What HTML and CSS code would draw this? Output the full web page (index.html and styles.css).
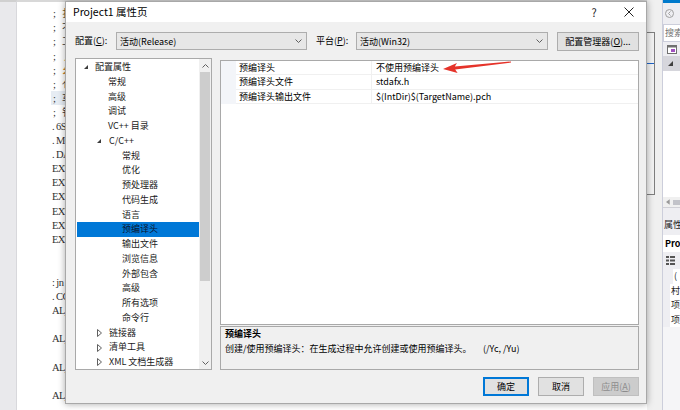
FILE: index.html
```html
<!DOCTYPE html>
<html lang="zh-CN">
<head>
<meta charset="utf-8">
<title>Project1 属性页</title>
<link rel="stylesheet" href="styles.css">
</head>
<body>
<div class="desktop">
  <div class="gutter"></div>
  <div class="editor">
    <div class="code-line"><span class="semi">;</span><span class="cj c-brown">扌</span></div>
    <div class="code-line"><span class="semi">;</span><span class="cj c-dark">不</span></div>
    <div class="code-line"><span class="semi">;</span><span class="cj c-dark">工</span></div>
    <div class="code-line"><span class="semi">;</span><span class="cj c-orange">丿</span></div>
    <div class="code-line"><span class="semi">;</span><span class="cj c-orange">幺</span></div>
    <div class="code-line"><span class="semi">;</span><span class="cj c-dark">亻</span></div>
    <div class="code-line hl"><span class="semi">;</span><span class="cj c-dark">车</span></div>
    <div class="code-line"><span class="semi">;</span><span class="cj c-dark">钅</span></div>
    <div class="code-line">. 6S</div>
    <div class="code-line">. MC</div>
    <div class="code-line">. DA</div>
    <div class="code-line">EXT</div>
    <div class="code-line">EXT</div>
    <div class="code-line">EXT</div>
    <div class="code-line">EXT</div>
    <div class="code-line">EXT</div>
    <div class="code-line">EXT</div>
    <div class="code-line"></div>
    <div class="code-line"></div>
    <div class="code-line">: jn</div>
    <div class="code-line">. CC</div>
    <div class="code-line">AL_</div>
    <div class="code-line"></div>
    <div class="code-line">AL_</div>
    <div class="code-line"></div>
    <div class="code-line">AL_</div>
    <div class="code-line"></div>
    <div class="code-line">AL_</div>
  </div>
  <div class="midstrip">
    <div class="bracket"><div class="blue-line"></div></div>
  </div>
  <div class="solution">
    <div class="sol-top"></div>
    <div class="sol-nav"><svg width="9" height="9" viewBox="0 0 9 9"><circle cx="4.5" cy="4.5" r="4" fill="none" stroke="#a0a0a0"/><path d="M5.5 2.5 L3.5 4.5 L5.5 6.5" fill="none" stroke="#a0a0a0"/></svg></div>
    <div class="sol-search"><span class="clip-text">搜索</span></div>
    <div class="sol-icons"><svg width="10" height="9" viewBox="0 0 10 9"><rect x="0.5" y="0.5" width="9" height="8" fill="#fff" stroke="#707070"/><rect x="0.5" y="0.5" width="9" height="2" fill="#707070"/><rect x="4" y="4" width="4" height="3" fill="#a050c0"/></svg></div>
    <div class="sol-sel"><svg width="5" height="5" viewBox="0 0 5 5"><polygon points="5,0 5,5 0,5" fill="#404040"/></svg></div>
    <div class="sol-tree"></div>
    <div class="sol-hscroll"><svg width="4" height="6" viewBox="0 0 4 6"><polygon points="4,0 4,6 0,3" fill="#999"/></svg><div class="hthumb"></div></div>
    <div class="sol-gap"></div>
    <div class="sol-head"><span class="clip-text">属性</span></div>
    <div class="sol-field">Pro</div>
    <div class="sol-tool"><svg width="9" height="9" viewBox="0 0 9 9"><rect x="0" y="0" width="3" height="2" fill="#555"/><rect x="4" y="0" width="5" height="2" fill="#555"/><rect x="0" y="3.5" width="3" height="2" fill="#555"/><rect x="4" y="3.5" width="5" height="2" fill="#555"/><rect x="0" y="7" width="3" height="2" fill="#555"/><rect x="4" y="7" width="5" height="2" fill="#555"/></svg></div>
    <div class="sol-props">
      <div class="sp-line"><span class="sp-gut"></span><span class="sp-txt">(</span></div>
      <div class="sp-line"><span class="sp-gut"></span><span class="sp-txt">村</span></div>
      <div class="sp-line"><span class="sp-gut"></span><span class="sp-txt">项</span></div>
      <div class="sp-line"><span class="sp-gut"></span><span class="sp-txt">项</span></div>
    </div>
    <div class="sol-rest"></div>
  </div>
</div>

<div class="dialog">
  <div class="titlebar">
    <span class="title">Project1 属性页</span>
    <span class="tb-btn help">?</span>
    <span class="tb-btn close"><svg width="10" height="10" viewBox="0 0 10 10"><path d="M0.5 0.5 L9.5 9.5 M9.5 0.5 L0.5 9.5" stroke="#222" stroke-width="1"/></svg></span>
  </div>
  <div class="dlg-body">
    <div class="config-row">
      <span class="lbl lbl1">配置(<u>C</u>):</span>
      <div class="combo combo1"><span class="combo-text">活动(Release)</span><svg class="chev" width="7" height="4" viewBox="0 0 7 4"><polyline points="0.5,0.5 3.5,3.5 6.5,0.5" fill="none" stroke="#606060"/></svg></div>
      <span class="lbl lbl2">平台(<u>P</u>):</span>
      <div class="combo combo2"><span class="combo-text">活动(Win32)</span><svg class="chev" width="7" height="4" viewBox="0 0 7 4"><polyline points="0.5,0.5 3.5,3.5 6.5,0.5" fill="none" stroke="#606060"/></svg></div>
      <button class="btn mgr">配置管理器(<u>O</u>)...</button>
    </div>

    <div class="main">
      <div class="tree">
        <div class="tree-list">
          <div class="ti l0"><span class="tg"><svg width="4" height="4" viewBox="0 0 4 4"><polygon points="4,0 4,4 0,4" fill="#3c3c3c"/></svg></span>配置属性</div>
          <div class="ti l1">常规</div>
          <div class="ti l1">高级</div>
          <div class="ti l1">调试</div>
          <div class="ti l1">VC++ 目录</div>
          <div class="ti l1t"><span class="tg"><svg width="4" height="4" viewBox="0 0 4 4"><polygon points="4,0 4,4 0,4" fill="#3c3c3c"/></svg></span>C/C++</div>
          <div class="ti l2">常规</div>
          <div class="ti l2">优化</div>
          <div class="ti l2">预处理器</div>
          <div class="ti l2">代码生成</div>
          <div class="ti l2">语言</div>
          <div class="ti l2 sel">预编译头</div>
          <div class="ti l2">输出文件</div>
          <div class="ti l2">浏览信息</div>
          <div class="ti l2">外部包含</div>
          <div class="ti l2">高级</div>
          <div class="ti l2">所有选项</div>
          <div class="ti l2">命令行</div>
          <div class="ti l1t"><span class="tg"><svg width="5" height="8" viewBox="0 0 5 8"><polygon points="0.5,0.5 4.5,4 0.5,7.5" fill="none" stroke="#606060"/></svg></span>链接器</div>
          <div class="ti l1t"><span class="tg"><svg width="5" height="8" viewBox="0 0 5 8"><polygon points="0.5,0.5 4.5,4 0.5,7.5" fill="none" stroke="#606060"/></svg></span>清单工具</div>
          <div class="ti l1t"><span class="tg"><svg width="5" height="8" viewBox="0 0 5 8"><polygon points="0.5,0.5 4.5,4 0.5,7.5" fill="none" stroke="#606060"/></svg></span>XML 文档生成器</div>
        </div>
        <div class="vscroll">
          <div class="sb-arrow"><svg width="7" height="4" viewBox="0 0 7 4"><polyline points="0.5,3.5 3.5,0.5 6.5,3.5" fill="none" stroke="#606060"/></svg></div>
          <div class="sb-track"><div class="sb-thumb"></div></div>
          <div class="sb-arrow"><svg width="7" height="4" viewBox="0 0 7 4"><polyline points="0.5,0.5 3.5,3.5 6.5,0.5" fill="none" stroke="#606060"/></svg></div>
        </div>
      </div>

      <div class="rightcol">
        <div class="grid">
          <div class="row"><div class="gut"></div><div class="name">预编译头</div><div class="val">不使用预编译头</div></div>
          <div class="row"><div class="gut"></div><div class="name">预编译头文件</div><div class="val">stdafx.h</div></div>
          <div class="row"><div class="gut"></div><div class="name">预编译头输出文件</div><div class="val">$(IntDir)$(TargetName).pch</div></div>
        </div>
        <div class="desc">
          <div class="desc-title">预编译头</div>
          <div class="desc-text"><span class="desc-main">创建/使用预编译头：在生成过程中允许创建或使用预编译头。</span><span class="desc-sw">(/Yc, /Yu)</span></div>
        </div>
      </div>
    </div>

    <div class="btn-row">
      <button class="btn ok">确定</button>
      <button class="btn">取消</button>
      <button class="btn disabled">应用(<u>A</u>)</button>
    </div>
  </div>
</div>

<svg class="arrow" width="75" height="20" viewBox="0 0 75 20">
  <polygon points="3,11 17,5 14.8,8.6 71,3.4 71,4.6 15.2,11.4 17.6,15 3,11" fill="#e5332a"/>
</svg>
</body>
</html>
```

FILE: styles.css
```css
* { box-sizing: border-box; margin: 0; padding: 0; }
html, body { width: 680px; height: 410px; overflow: hidden; }
body {
  position: relative;
  font-family: "Noto Sans CJK SC", "Noto Sans", sans-serif;
  font-size: 9px;
  color: #000;
  background: #fff;
}

/* ---------- background (IDE behind the dialog) ---------- */
.desktop { display: flex; width: 680px; height: 410px; }
.gutter {
  width: 17px;
  background: #e9e9ec;
  border-right: 1px solid #d8d8dc;
  border-top: 2px solid #d0d0d0;
}
.editor {
  flex: 1;
  padding: 4px 0 0 35px;
  border-top: 2px solid #d8d8d8;
  font-family: "Liberation Serif", serif;
  font-size: 10.5px;
  letter-spacing: -0.6px;
  color: #303030;
  overflow: hidden;
}
.code-line { height: 14.2px; line-height: 14.2px; white-space: pre; overflow: hidden; }
.code-line.hl { background: #e6ecf3; width: 24px; margin-left: -1px; padding-left: 1px; }
.semi { display: inline-block; width: 10px; padding-left: 1px; }
.cj { font-family: "Noto Sans CJK SC", sans-serif; font-size: 10px; line-height: 14px; letter-spacing: 0; }
.c-brown { color: #6b5a2a; }
.c-dark { color: #3a3a3a; }
.c-orange { color: #c8842c; }

.midstrip { width: 15px; background: #f0f0f0; }
.bracket {
  margin-top: 32px;
  width: 8px;
  height: 163px;
  border: 1px solid #7f7f7f;
  border-left: none;
  background: #f3f3f3;
}
.blue-line { margin-top: 30px; height: 1px; background: #1e64c8; }

.solution {
  width: 18px;
  display: flex;
  flex-direction: column;
  border-left: 1px solid #cccedb;
  background: #eeeef2;
  overflow: hidden;
}
.clip-text { display: block; overflow: hidden; white-space: nowrap; }
.sol-top { height: 3px; background: #007acc; }
.sol-nav { height: 21px; display: flex; align-items: center; padding-left: 2px; }
.sol-search {
  height: 18px; background: #fff; border: 1px solid #cccedb; border-right: none;
  font-size: 9px; color: #717171; line-height: 16px; padding-left: 1px; overflow: hidden;
}
.sol-icons { height: 14px; display: flex; align-items: center; padding-left: 4px; }
.sol-sel { height: 15px; background: #d6d6dc; display: flex; align-items: center; padding-left: 5px; }
.sol-tree { height: 126px; background: #fff; }
.sol-hscroll { height: 10px; background: #f0f0f0; display: flex; align-items: center; padding-left: 3px; gap: 3px; }
.hthumb { width: 8px; height: 5px; background: #c2c3c9; }
.sol-gap { height: 8px; border-top: 1px solid #d0d0d6; }
.sol-head { height: 20px; line-height: 20px; font-size: 9px; color: #1e1e1e; padding-left: 1px; overflow: hidden; }
.sol-field { height: 17px; line-height: 17px; background: #fff; font-weight: bold; font-size: 9px; padding-left: 2px; white-space: nowrap; overflow: hidden; }
.sol-tool { height: 17px; display: flex; align-items: center; padding-left: 3px; }
.sol-props { background: #fff; }
.sp-line { display: flex; height: 14.5px; }
.sp-gut { width: 10px; background: #eeeef2; }
.sp-txt { line-height: 14.5px; font-size: 9px; color: #1e1e1e; padding-left: 1px; white-space: nowrap; }
.sol-rest { flex: 1; background: #f5f5f7; }

/* ---------- the dialog ---------- */
.dialog {
  position: absolute;
  left: 65px;
  top: 1px;
  width: 582px;
  height: 403px;
  background: #f0f0f0;
  border: 1px solid #a8a8a8;
  box-shadow: 0 0 7px rgba(0, 0, 0, 0.35);
  display: flex;
  flex-direction: column;
}
.titlebar {
  height: 20px;
  background: #fff;
  display: flex;
  align-items: center;
  padding-left: 7px;
}
.title { flex: 1; font-size: 10.5px; line-height: 20px; color: #000; }
.tb-btn { display: flex; align-items: center; justify-content: center; height: 20px; font-size: 11px; color: #222; }
.help { width: 30px; margin-right: 3px; }
.close { width: 34px; }

.dlg-body { flex: 1; padding: 9px 7px 0 9px; display: flex; flex-direction: column; }

.config-row { display: flex; align-items: center; height: 20px; }
.lbl { font-size: 9px; line-height: 18px; white-space: nowrap; }
.lbl1 { width: 41px; }
.lbl2 { width: 40px; margin-left: 9px; }
.combo {
  height: 18px;
  background: #e7e7e7;
  border: 1px solid #adadad;
  display: flex;
  align-items: center;
  padding: 0 4px 0 3px;
}
.combo1 { width: 191px; }
.combo2 { width: 192px; }
.combo-text { flex: 1; font-size: 9px; white-space: nowrap; }
.chev { flex: none; }

.btn {
  font-family: inherit;
  font-size: 9px;
  color: #000;
  background: #e1e1e1;
  border: 1px solid #adadad;
  height: 19px;
  width: 46px;
  display: flex;
  align-items: center;
  justify-content: center;
  white-space: nowrap;
}
.mgr { width: 82px; margin-left: 9px; height: 19px; }
.ok { border-color: #0078d7; box-shadow: inset 0 0 0 1px #0078d7; }
.disabled { background: #cccccc; border-color: #bfbfbf; color: #8c8c8c; }

.main { display: flex; gap: 8px; height: 312px; margin-top: 7px; }

.tree {
  width: 137px;
  height: 312px;
  border: 1px solid #a9a9a9;
  background: #fff;
  display: flex;
}
.tree-list { flex: 1; padding-top: 1px; overflow: hidden; }
.ti {
  display: flex;
  align-items: center;
  height: 14.75px;
  line-height: 14.75px;
  white-space: nowrap;
  color: #1a1a1a;
}
.tg { width: 11px; display: flex; align-items: center; }
.l0 { padding-left: 8px; }
.l1 { padding-left: 32px; }
.l1t { padding-left: 21px; }
.l1t .tg { width: 12px; }
.l2 { padding-left: 46px; }
.sel { background: #0078d7; color: #0a1530; margin-left: 1px; padding-left: 45px; }

.vscroll { width: 12px; background: #f0f0f0; display: flex; flex-direction: column; }
.sb-arrow { height: 13px; display: flex; align-items: center; justify-content: center; }
.sb-track { flex: 1; padding: 0 1px; }
.sb-thumb { height: 209px; background: #cdcdcd; }

.rightcol { flex: 1; display: flex; flex-direction: column; }
.grid {
  margin-top: 2px;
  height: 265px;
  background: #fff;
  border: 1px solid #a9a9a9;
}
.row { display: flex; height: 14.4px; }
.gut { width: 15px; background: #f3f5f9; }
.name {
  width: 136px;
  padding-left: 3px;
  line-height: 14px;
  border-bottom: 1px solid #f0f0f0;
  border-right: 1px solid #f0f0f0;
  white-space: nowrap;
}
.val {
  flex: 1;
  padding-left: 4px;
  line-height: 14px;
  border-bottom: 1px solid #f0f0f0;
  white-space: nowrap;
}
.desc {
  margin-top: 1px;
  height: 44px;
  border: 1px solid #a9a9a9;
  background: #f0f0f0;
  padding: 0 4px;
}
.desc-title { font-weight: bold; line-height: 14px; }
.desc-text { display: flex; line-height: 15px; white-space: nowrap; }
.desc-main { width: 258px; }

.btn-row { display: flex; justify-content: flex-end; gap: 9px; margin-top: 7px; }

/* annotation arrow drawn over the grid */
.arrow { position: absolute; left: 440px; top: 58px; }
```
